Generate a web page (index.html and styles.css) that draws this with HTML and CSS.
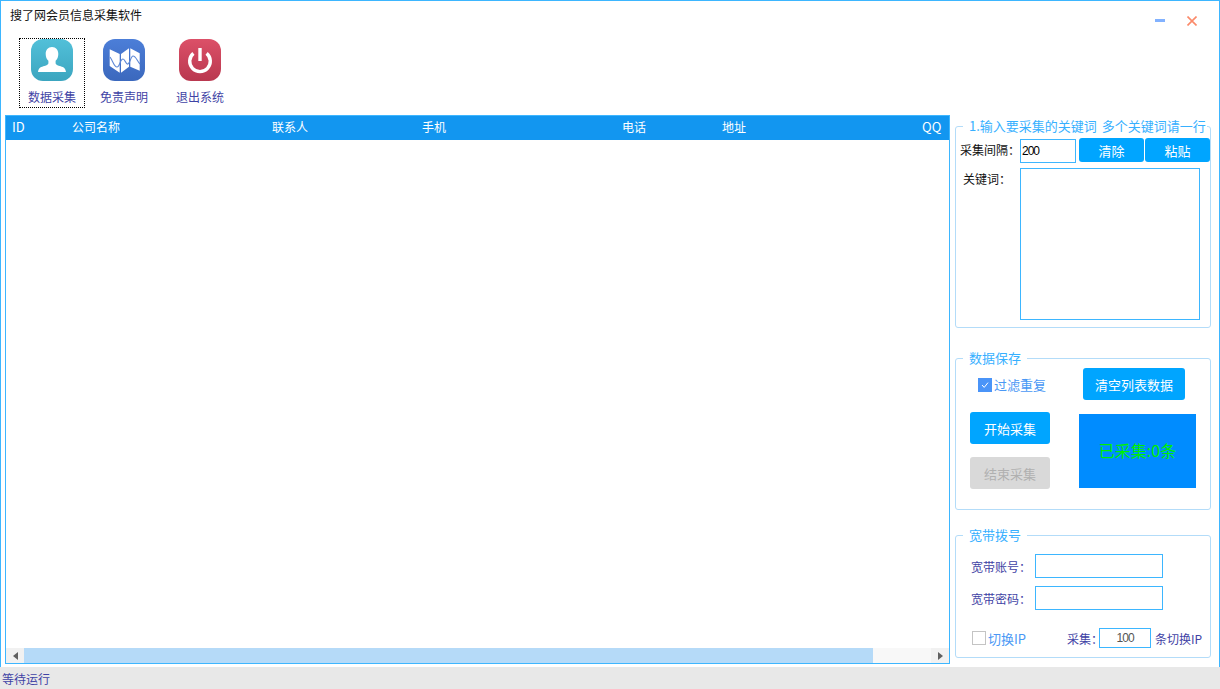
FILE: index.html
```html
<!doctype html>
<html lang="zh-CN">
<head>
    <meta charset="UTF-8">
    <title>搜了网会员信息采集软件</title>
    <link rel="stylesheet" href="styles.css">
</head>
<body>
    <div class="window">
        <!-- Title bar -->
        <div class="titlebar">
            <span class="title">搜了网会员信息采集软件</span>
            <div class="win-btns">
                <svg width="10" height="3" viewBox="0 0 10 3"><rect width="10" height="3" fill="#82b2ff"/></svg>
                <svg width="10" height="10" viewBox="0 0 10 10"><path d="M0.5 0.5 L9.5 9.5 M9.5 0.5 L0.5 9.5" stroke="#fb8a6a" stroke-width="1.6" fill="none"/></svg>
            </div>
        </div>

        <!-- Toolbar -->
        <div class="toolbar">
            <div class="tool tool-active">
                <svg width="42" height="42" viewBox="0 0 42 42">
                    <defs>
                        <linearGradient id="g1" x1="0" y1="0" x2="0" y2="1"><stop offset="0" stop-color="#52c0d9"/><stop offset="1" stop-color="#3ba5bf"/></linearGradient>
                    </defs>
                    <rect width="42" height="42" rx="12" fill="url(#g1)"/>
                    <path d="M21 8c-4 0-6.300 3-6.300 7 0 2.900 1 5.300 2.700 6.800v2.400c0 1.300-1.500 2-4 2.800-3 .9-5.800 1.300-6.400 6h28c-.6-4.700-3.400-5.100-6.400-6-2.500-.8-4-1.500-4-2.800v-2.400c1.700-1.500 2.700-3.900 2.700-6.800 0-4-2.300-7-6.300-7z" fill="#fff"/>
                </svg>
                <span>数据采集</span>
            </div>
            <div class="tool">
                <svg width="42" height="42" viewBox="0 0 42 42">
                    <defs>
                        <linearGradient id="g2" x1="0" y1="0" x2="0" y2="1"><stop offset="0" stop-color="#4c7ed8"/><stop offset="1" stop-color="#3b68bd"/></linearGradient>
                    </defs>
                    <rect width="42" height="42" rx="12" fill="url(#g2)"/>
                    <path d="M6.700 10.300L16.700 15V33.700L6.700 27z M18 15L26 9.300V27.700L18 33.700z M27.300 9.300L36.700 14.300V31.700L27.300 27.700z" fill="#fff"/>
                    <path d="M7 18C10 22 11 28 14 28C17 28 17 20 20 20C22 20 23 26 25 25C27 24 28 17 30 17C33 17 34 22 37 25" stroke="#5d88d6" stroke-width="1.100" fill="none"/>
                </svg>
                <span>免责声明</span>
            </div>
            <div class="tool">
                <svg width="42" height="42" viewBox="0 0 42 42">
                    <defs>
                        <linearGradient id="g3" x1="0" y1="0" x2="0" y2="1"><stop offset="0" stop-color="#dc5068"/><stop offset="1" stop-color="#b9384f"/></linearGradient>
                    </defs>
                    <rect width="42" height="42" rx="12" fill="url(#g3)"/>
                    <path d="M14.400 14.400a10.300 10.300 0 1 0 13.200 0" stroke="#fff" stroke-width="3.400" fill="none"/>
                    <path d="M21 9v13" stroke="#fff" stroke-width="3.400" fill="none"/>
                </svg>
                <span>退出系统</span>
            </div>
        </div>

        <!-- Main area -->
        <div class="main">
            <div class="list">
                <div class="list-head">
                    <span class="latin">ID</span>
                    <span>公司名称</span>
                    <span>联系人</span>
                    <span>手机</span>
                    <span>电话</span>
                    <span>地址</span>
                    <span class="latin">QQ</span>
                </div>
                <div class="list-body"></div>
                <div class="hscroll">
                    <div class="arrow"><svg width="5" height="8" viewBox="0 0 5 8"><path d="M5 0v8L0 4z" fill="#606060"/></svg></div>
                    <div class="track"><div class="thumb"></div></div>
                    <div class="arrow"><svg width="5" height="8" viewBox="0 0 5 8"><path d="M0 0v8l5-4z" fill="#606060"/></svg></div>
                </div>
            </div>

            <div class="side">
                <fieldset class="group group-keywords">
                    <legend>1.输入要采集的关键词 多个关键词请一行</legend>
                    <div class="interval-row">
                        <label class="black-label">采集间隔：</label>
                        <input class="input interval-input" type="text" value="200">
                        <button class="btn btn-small">清除</button>
                        <button class="btn btn-small">粘贴</button>
                    </div>
                    <div class="keyword-row">
                        <label class="black-label">关键词：</label>
                        <textarea class="input keyword-box"></textarea>
                    </div>
                </fieldset>

                <fieldset class="group group-save">
                    <legend>数据保存</legend>
                    <div class="save-cols">
                        <div class="save-left">
                            <div class="check-line">
                                <span class="check check-on">
                                    <svg width="10" height="10" viewBox="0 0 10 10"><path d="M2 5l2.200 2.400L8 2.600" stroke="#fff" stroke-width="1" fill="none"/></svg>
                                </span>
                                <span class="check-text">过滤重复</span>
                            </div>
                            <button class="btn btn-big">开始采集</button>
                            <button class="btn btn-big btn-off">结束采集</button>
                        </div>
                        <div class="save-right">
                            <button class="btn btn-clear">清空列表数据</button>
                            <div class="count-box">已采集:0条</div>
                        </div>
                    </div>
                </fieldset>

                <fieldset class="group group-dial">
                    <legend>宽带拨号</legend>
                    <div class="dial-row">
                        <label>宽带账号：</label>
                        <input class="input dial-input" type="text">
                    </div>
                    <div class="dial-row">
                        <label>宽带密码：</label>
                        <input class="input dial-input" type="text">
                    </div>
                    <div class="switch-row">
                        <span class="check"></span>
                        <span class="check-text">切换IP</span>
                        <label class="switch-label">采集：</label>
                        <input class="input switch-input" type="text" value="100">
                        <label>条切换IP</label>
                    </div>
                </fieldset>
            </div>
        </div>
    </div>

    <!-- Status bar -->
    <div class="statusbar">等待运行</div>
</body>
</html>
```

FILE: styles.css
```css
* {
    margin: 0;
    padding: 0;
    box-sizing: border-box;
}

body {
    width: 1220px;
    height: 689px;
    overflow: hidden;
    display: flex;
    flex-direction: column;
    background: #fff;
    font-family: "Noto Sans CJK SC", "Noto Sans", sans-serif;
    font-size: 12px;
    color: #3f43a5;
}

.window {
    height: 667px;
    border: 1px solid #3db6ff;
    border-bottom: none;
    background: #fff;
}

/* Title bar */
.titlebar {
    height: 30px;
    display: flex;
    justify-content: space-between;
    padding-left: 9px;
}

.title {
    color: #111;
    line-height: 28px;
}

.win-btns {
    display: flex;
    align-items: flex-start;
    gap: 22px;
    padding: 15px 22px 0 0;
}

.win-btns svg:first-child {
    margin-top: 3px;
}

/* Toolbar */
.toolbar {
    height: 84px;
    display: flex;
    padding: 7px 0 0 18px;
    gap: 6px;
}

.tool {
    width: 66px;
    height: 70px;
    display: flex;
    flex-direction: column;
    align-items: center;
    border: 1px solid transparent;
}

.tool + .tool + .tool {
    margin-left: 4px;
}

.tool span {
    margin-top: 7px;
    line-height: 18px;
}

.tool-active {
    border: 1px dotted #000;
}

/* Main */
.main {
    display: flex;
    padding-left: 4px;
}

.list {
    width: 945px;
    height: 549px;
    border: 1px solid #3db6ff;
    display: flex;
    flex-direction: column;
}

.list-head {
    height: 24px;
    background: #1296f0;
    color: #fff;
    display: grid;
    grid-template-columns: 60px 200px 150px 200px 100px 200px 1fr;
    line-height: 22px;
}

.list-head span {
    padding-left: 6px;
}

.list-head .latin {
    font-size: 13px;
}

.list-body {
    flex: 1;
}

.hscroll {
    height: 15px;
    display: flex;
    background: #f8f8f8;
}

.arrow {
    width: 18px;
    background: #f1f1f1;
    display: flex;
    align-items: center;
    justify-content: center;
}

.track {
    flex: 1;
}

.thumb {
    width: 849px;
    height: 15px;
    background: #b5daf8;
}

/* Side groups */
.side {
    width: 256px;
    margin-left: 5px;
    padding-top: 2px;
}

.group {
    min-width: 0;
    border: 1px solid #b3dcf9;
    border-radius: 3px;
    padding: 0 0 0 4px;
}

.group legend {
    margin-left: 3px;
    padding: 0 6px;
    font-size: 13px;
    line-height: 18px;
    color: #37b0ff;
    white-space: nowrap;
}

.group-keywords {
    height: 211px;
}

.group-keywords legend {
    padding-right: 1px;
    word-spacing: 2px;
}

.group-save {
    height: 161px;
    margin-top: 21px;
}

.group-dial {
    height: 132px;
    margin-top: 16px;
}

.input {
    border: 1px solid #3db6ff;
    background: #fff;
    outline: none;
    font-family: "Liberation Sans", sans-serif;
    font-size: 12px;
    letter-spacing: -1px;
    color: #000;
    resize: none;
    display: block;
}

.btn {
    border: none;
    border-radius: 3px;
    background: #00a5ff;
    color: #fff;
    font-family: inherit;
    font-size: 13px;
}

.black-label {
    color: #111;
}

/* Keywords */
.interval-row {
    display: flex;
    padding-top: 3px;
}

.interval-row .black-label {
    width: 60px;
    line-height: 24px;
    white-space: nowrap;
}

.interval-input {
    width: 56px;
    height: 24px;
    margin-top: 1px;
    padding-left: 1px;
    margin-right: 3px;
}

.btn-small {
    width: 65px;
    height: 24px;
}

.btn-small + .btn-small {
    margin-left: 1px;
}

.keyword-row {
    display: flex;
    padding-top: 5px;
}

.keyword-row .black-label {
    width: 60px;
    padding: 2px 0 0 3px;
    line-height: 18px;
}

.keyword-box {
    width: 180px;
    height: 152px;
}

/* Data save */
.save-cols {
    display: flex;
}

.save-left {
    width: 119px;
    padding-left: 10px;
}

.check-line {
    display: flex;
    align-items: center;
    padding: 7px 0 0 8px;
    height: 28px;
    margin-bottom: 17px;
}

.check {
    width: 14px;
    height: 14px;
    display: flex;
    align-items: center;
    justify-content: center;
    border: 1px solid #c4c4c4;
    flex-shrink: 0;
}

.check-on {
    background: #4a94f8;
    border: none;
}

.check-text {
    margin-left: 2px;
    font-size: 13px;
    color: #4a98f5;
}

.btn-big {
    display: block;
    width: 80px;
    height: 32px;
    margin-bottom: 13px;
}

.btn-off {
    background: #d9d9d9;
    color: #b0b0b0;
}

.save-right {
    padding-top: 1px;
}

.btn-clear {
    display: block;
    width: 102px;
    height: 32px;
    margin: 0 0 14px 4px;
}

.count-box {
    width: 117px;
    height: 74px;
    background: #008cff;
    color: #00f000;
    font-size: 16px;
    line-height: 72px;
    text-align: center;
    white-space: nowrap;
}

/* Broadband */
.dial-row {
    display: flex;
    align-items: center;
    padding-left: 11px;
    height: 24px;
    margin-bottom: 8px;
}

.group-dial .dial-row:first-of-type {
    margin-top: 10px;
}

.dial-row label {
    width: 64px;
}

.dial-input {
    width: 128px;
    height: 24px;
}

.switch-row {
    display: flex;
    align-items: center;
    height: 20px;
    margin-top: 18px;
    padding-left: 12px;
    white-space: nowrap;
}

.switch-label {
    margin-left: 41px;
    width: 32px;
}

.switch-input {
    width: 52px;
    height: 20px;
    margin-right: 4px;
    text-align: center;
    color: #555;
}

/* Status bar */
.statusbar {
    height: 22px;
    background: #e8e8e8;
    padding-left: 2px;
    line-height: 23px;
    font-size: 12px;
}
```
